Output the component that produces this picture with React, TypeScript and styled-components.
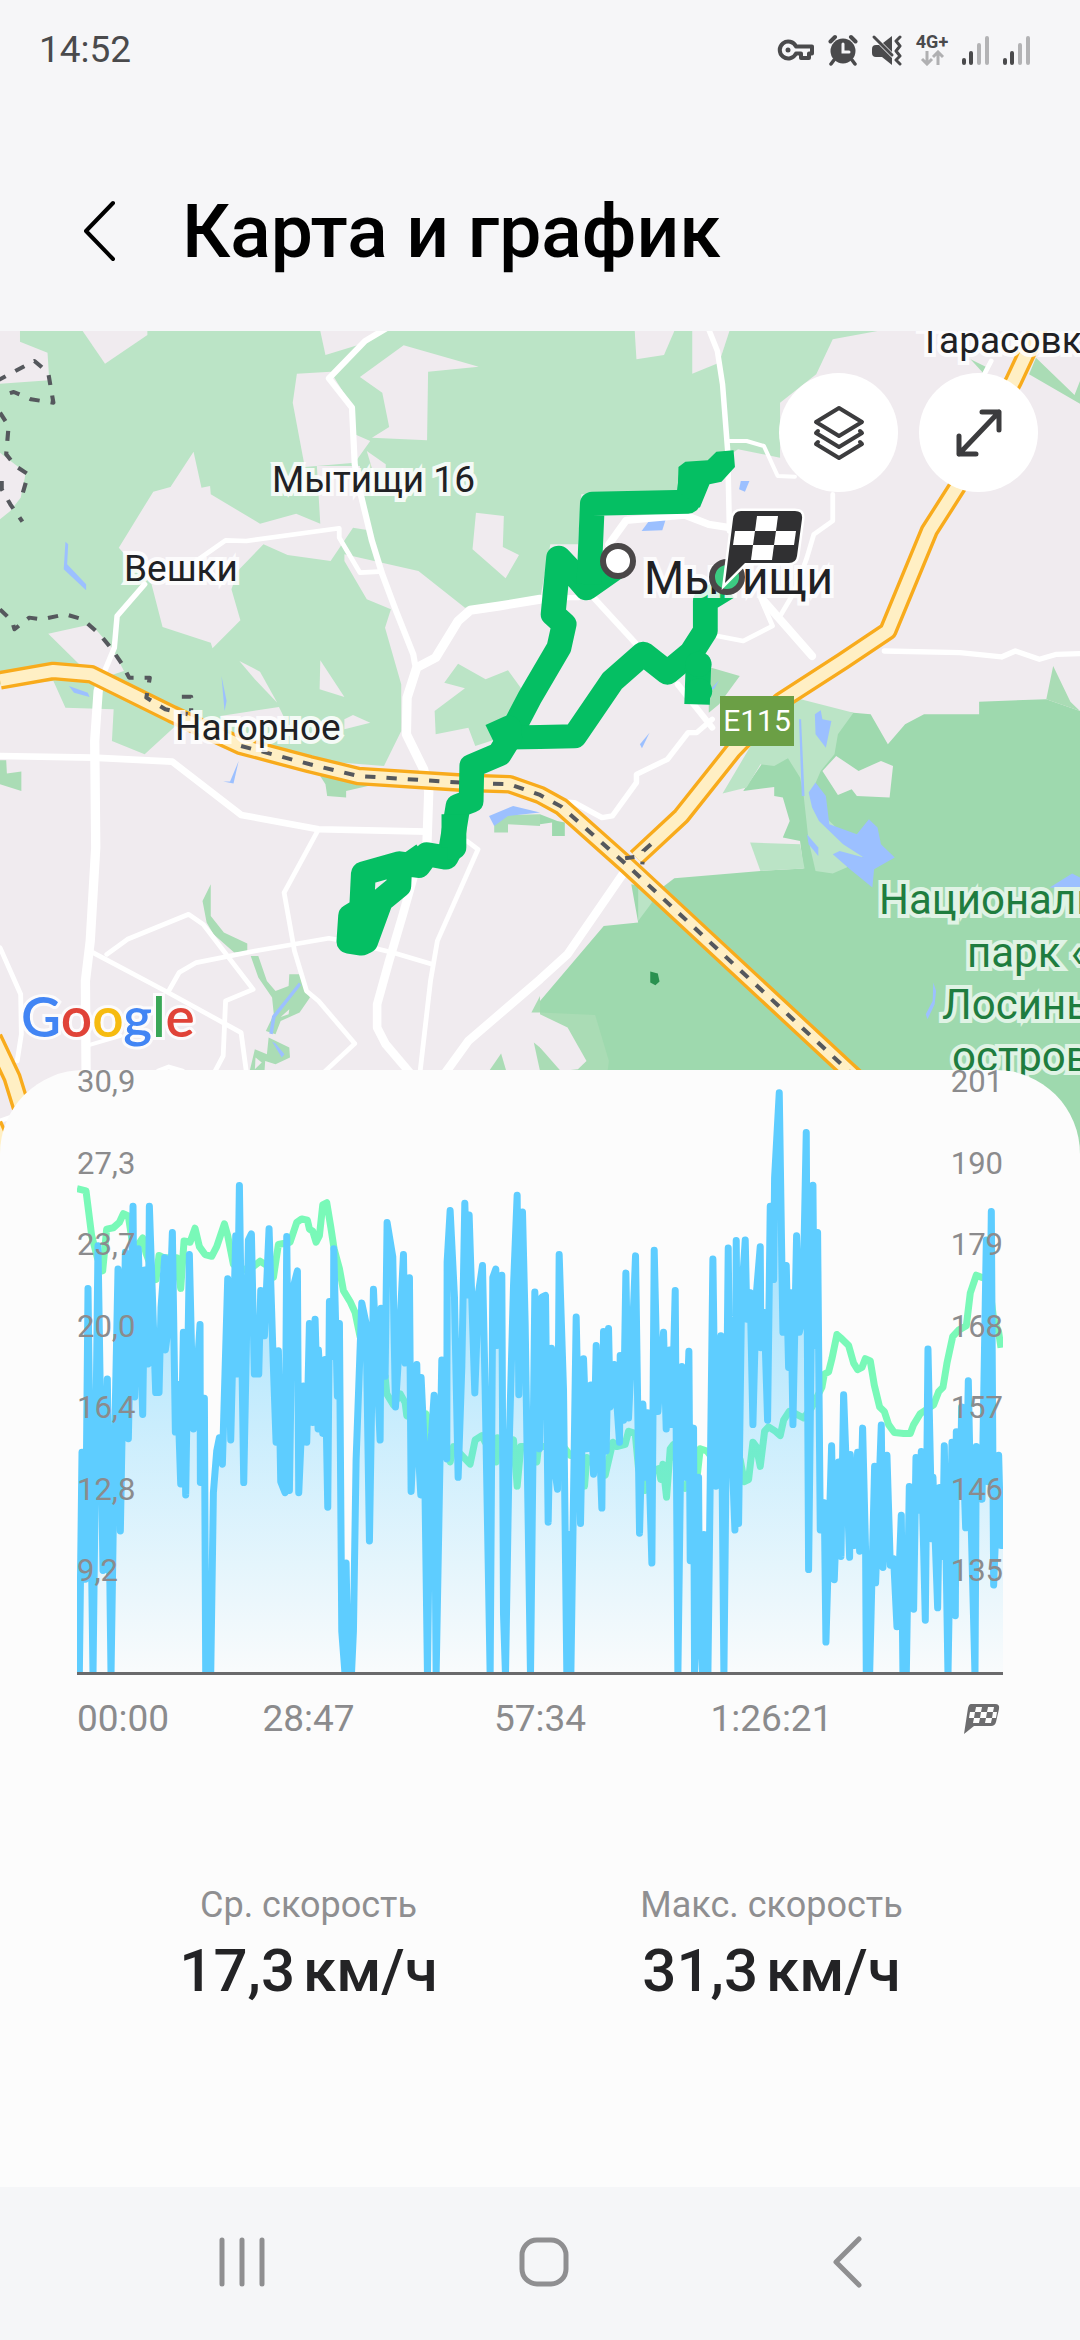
import React from "react";
import styled, { createGlobalStyle } from "styled-components";

const Global = createGlobalStyle`
  * { box-sizing: border-box; }
  body {
    margin: 0;
    background: #f6f6f8;
    font-family: Roboto, "Noto Sans", sans-serif;
  }
  button {
    border: 0;
    padding: 0;
    background: none;
    font: inherit;
    cursor: pointer;
  }
`;

const Screen = styled.div`
  display: flex;
  flex-direction: column;
  min-height: 100vh;
  overflow: hidden;
`;

const StatusBar = styled.header`
  display: flex;
  align-items: center;
  justify-content: space-between;
  height: 100px;
  padding: 0 50px 0 39px;
  color: #4a4a4c;
`;

const Clock = styled.time`
  font-size: 37px;
  line-height: 44px;
`;

const StatusIcons = styled.div`
  display: flex;
  align-items: center;
  gap: 13px;
`;

const Network = styled.div`
  display: flex;
  flex-direction: column;
  align-items: center;
  width: 32px;
  font-size: 18px;
  font-weight: 700;
  line-height: 16px;
`;

const TitleBar = styled.div`
  display: flex;
  align-items: center;
  gap: 58px;
  height: 231px;
  padding: 30px 74px 0;
`;

const BackButton = styled.button`
  display: flex;
  width: 50px;
  height: 80px;
  align-items: center;
  justify-content: center;
`;

const Title = styled.h1`
  margin: 0;
  font-size: 75px;
  font-weight: 500;
  line-height: 96px;
  color: #000;
`;

const MapArea = styled.section`
  position: relative;
  height: 824px;
  overflow: hidden;
  background: #f0ebef;
`;

const MapLayer = styled.svg`
  position: absolute;
  inset: 0;
  width: 100%;
  height: 100%;
`;

type LabelProps = { $x: number; $y: number; $size?: number; $park?: boolean };

const MapLabel = styled.span<LabelProps>`
  position: absolute;
  left: ${(p) => p.$x}px;
  top: ${(p) => p.$y}px;
  font-size: ${(p) => p.$size ?? 37}px;
  line-height: 52px;
  font-weight: 400;
  color: ${(p) => (p.$park ? "#1f7d3f" : "#202124")};
  white-space: nowrap;
  -webkit-text-stroke: 8px ${(p) => (p.$park ? "#e0f3e5" : "rgba(255, 255, 255, 0.85)")};
  paint-order: stroke fill;
  stroke-linejoin: round;
`;

const RoadShield = styled.span`
  position: absolute;
  left: 720px;
  top: 365px;
  width: 74px;
  height: 50px;
  background: #6b9f45;
  color: #fff;
  font-size: 30px;
  font-weight: 400;
  line-height: 50px;
  text-align: center;
`;

const GoogleMark = styled.span`
  position: absolute;
  left: 21px;
  top: 650px;
  font-family: Lato, sans-serif;
  font-size: 55px;
  font-weight: 600;
  line-height: 70px;
  -webkit-text-stroke: 6px rgba(255, 255, 255, 0.8);
  paint-order: stroke fill;
`;

const Letter = styled.span<{ $color: string }>`
  color: ${(p) => p.$color};
`;

const MapTools = styled.div`
  position: absolute;
  top: 42px;
  right: 42px;
  display: flex;
  gap: 21px;
`;

const RoundButton = styled.button`
  display: flex;
  width: 119px;
  height: 119px;
  align-items: center;
  justify-content: center;
  border-radius: 50%;
  background: #fff;
`;

const Panel = styled.main`
  position: relative;
  flex: 1;
  margin-top: -85px;
  padding: 0 77px;
  border-radius: 84px 84px 0 0;
  background: #fcfcfc;
`;

const Plot = styled.div`
  position: relative;
  height: 605px;
  border-bottom: 3px solid #6a6a6c;
`;

const PlotArt = styled.svg`
  display: block;
  width: 100%;
  height: 100%;
`;

const Scale = styled.div<{ $side: "left" | "right" }>`
  position: absolute;
  top: 0;
  ${(p) => p.$side}: 0;
  display: flex;
  flex-direction: column;
  justify-content: space-between;
  height: 513px;
  font-size: 31px;
  line-height: 24px;
  color: #8b8b8d;
`;

const TimeAxis = styled.div`
  display: grid;
  grid-template-columns: 1fr 2fr 2fr 2fr 1fr;
  align-items: center;
  justify-items: center;
  padding-top: 22px;
  font-size: 37px;
  line-height: 44px;
  color: #8b8b8d;
`;

const EdgeTick = styled.span<{ $end?: boolean }>`
  display: flex;
  justify-self: ${(p) => (p.$end ? "end" : "start")};
  padding-right: ${(p) => (p.$end ? 3 : 0)}px;
`;

const Stats = styled.dl`
  display: grid;
  grid-template-columns: 1fr 1fr;
  margin: 0;
  padding: 142px 0 100px;
  text-align: center;
`;

const StatName = styled.dt`
  font-size: 36px;
  line-height: 44px;
  color: #8f8f91;
`;

const StatValue = styled.dd`
  display: flex;
  justify-content: center;
  gap: 8px;
  margin: 6px 0 0;
  font-size: 60px;
  font-weight: 500;
  line-height: 76px;
  color: #232325;
`;

const NavBar = styled.nav`
  display: grid;
  grid-template-columns: repeat(3, 1fr);
  height: 153px;
  padding: 0 82px 4px 91px;
  background: #f5f6f8;
`;

const NavButton = styled.button`
  display: flex;
  align-items: center;
  justify-content: center;
`;

/* Speed, in three stretches; each x is counted from the stretch's start. */
const speed = [
  {
    start: 0,
    points:
      "58,1400 66,893 76,1182 84,520 99,1400 114,423 129,1162 142,726 153,1400 163,900 174,476 181,1072 196,438 205,862 219,333 224,767 235,430 248,807 254,478 264,692 268,333 287,757 297,757 303,563 314,450 316,660 328,590 337,393 346,847 352,738 362,965 370,620 377,990 388,443 400,840 420,602 421,962 433,770 437,1400 447,1200 452,1400 460,985 470,890 478,860 487,920 503,498 512,865 527,400 530,715 538,286 551,962 565,410 574,396 583,715 596,715 602,525 613,628 627,384 640,700 648,870 655,662 662,960 675,985 680,402 688,980 697,525 712,480 716,985 730,742 740,870 748,600 758,825 765,590 774,840 775,660 788,850 795,682 803,1018 808,550 820,675 821,430 832,765 838,600 845,1300 855,1400 858,1145 864,1400 874,1400 880,1300 888,910 905,553 918,600 928,1095 940,522 960,865 963,565 975,720 981,370",
  },
  {
    start: 990,
    points:
      "8,448 16,790 24,690 40,443 45,690 58,496 63,982 80,693 84,880 92,990 93,723 103,890 112,1400 120,900 132,763 138,1400 155,683 158,870 170,908 171,460 180,343 193,540 204,950 215,700 224,326 232,535 237,353 254,758 265,530 277,468 285,750 300,1400 308,495 317,476 321,650 335,490 340,1260 346,1400 358,850 370,515 381,308 386,762 397,346 405,600 421,1400 434,528 448,885 455,540 466,536 474,1052 484,656 488,900 502,977 507,443 520,750 530,1400 538,1080 542,1400 558,585 571,1055 580,680 590,885 602,740 610,943 618,650 635,1020 640,618 648,890 655,611 660,790 672,693 688,870 690,673 700,820 707,485 715,815 728,600 736,446 748,1077 758,783 768,950 772,803 785,1145 792,433 803,800 820,620 828,840 838,660 845,830 855,525 863,1400 875,698 883,950 896,663 900,1140 910,838 913,1400 925,950 927,1200 937,1400 941,1080 953,1400 968,453 977,970 992,628 1001,1400",
  },
  {
    start: 1980,
    points:
      "24,428 28,750 44,1070 48,411 55,1055 64,540 75,410 80,590 90,530 98,830 108,535 120,425 122,655 132,575 142,820 150,333 160,500 163,268 177,75 188,620 198,468 205,700 212,530 218,830 229,400 237,620 247,590 258,165 265,1160 278,285 282,650 292,393 300,1070 312,1008 317,1325 334,878 342,1183 355,915 362,1130 370,762 388,1132 390,898 403,1105 412,893 418,1118 427,838 436,1120 438,1400 447,1225 448,1400 463,925 466,1190 483,831 488,1155 500,900 510,1150 520,1135 530,1290 543,1036 548,1400 558,1400 567,971 580,1250 587,905 597,1025 603,891 615,1275 623,658 635,1090 638,950 652,1247 658,973 667,1130 672,878 683,1400 695,870 705,1265 708,846 720,990 724,790 736,1065 744,730 752,1040 764,1400 768,880 785,1000 798,410 803,960 813,345 820,1195 835,900 842,1105 848,1105",
  },
];

/* Heart rate, in the same units as the speed. */
const pulse = [
  {
    start: 0,
    points:
      "51,293 78,298 95,400 112,450 128,480 140,385 160,382 178,370 190,350 205,355 218,420 235,420 248,405 258,440 278,480 288,500 297,445 310,450 350,450 362,520 372,412 390,415 405,383 418,425 435,443 455,447 470,425 493,373 503,400 520,465 540,480 580,470 600,458 625,470 640,495 655,420 690,415 710,370 725,362 742,365 748,385 758,390 768,415 778,400 788,330 800,325 812,380 822,430 838,475 850,525 870,550 885,575 900,630 930,640 950,690 975,720 980,760 1000,785 1020,760 1035,780",
  },
  {
    start: 990,
    points:
      "50,810 90,820 103,880 107,805 130,850 150,850 180,915 190,880 215,900 240,920 255,865 275,855 285,870 300,880 318,915 322,860 345,880 370,865 378,940 381,970 392,880 420,880 440,915 445,880 520,880 540,900 570,905 583,970 590,905 610,920 645,945 668,870 680,880 705,875 715,845 735,850 745,930 765,980 780,940 805,930 812,955 818,920 829,995 840,885 850,875 870,960 885,975 900,950 922,940 930,885 950,890 980,920 1010,940",
  },
  {
    start: 1980,
    points:
      "28,938 60,910 72,960 85,955 98,870 108,880 120,925 133,845 145,835 165,845 180,855 190,820 207,800 225,805 250,815 275,790 305,745 312,715 325,710 335,680 350,625 365,635 385,650 400,690 412,705 425,700 435,680 450,685 462,740 478,790 492,800 505,830 522,848 550,850 570,850 580,830 600,805 640,785 655,755 668,745 680,690 697,630 715,615 738,605 750,530 768,490 785,495 805,500 820,590 835,620 842,655",
  },
];

const join = (parts: { start: number; points: string }[]) =>
  parts
    .flatMap(({ start, points }) =>
      points.split(" ").map((pair) => {
        const [x, y] = pair.split(",").map(Number);
        return `${x + start},${y}`;
      }),
    )
    .join(" ");

const speedLine = join(speed);
const pulseLine = join(pulse);

const speedTicks = ["30,9", "27,3", "23,7", "20,0", "16,4", "12,8", "9,2"];
const pulseTicks = ["201", "190", "179", "168", "157", "146", "135"];

const FOREST = "#bbe4c6";
const PARK = "#9ed9ae";
const GROVE = "#aadcb5";
const LAND = "#f0ebef";
const WATER = "#9cc0ff";

/* The map is drawn in four quarters, each with its own origin. */
const NW = "translate(0 0)";
const NE = "translate(1568 0)";
const SW = "translate(0 1230)";
const SE = "translate(1568 1230)";

function Areas({ at, fill, shapes }: { at: string; fill: string; shapes: string[] }) {
  return (
    <g transform={at} fill={fill}>
      {shapes.map((s) => (
        <polygon key={s} points={s} />
      ))}
    </g>
  );
}

function Roads({ at, roads }: { at: string; roads: [number, string][] }) {
  return (
    <g transform={at} fill="none" stroke="#fff" strokeLinecap="round" strokeLinejoin="round">
      {roads.map(([w, s]) => (
        <polyline key={s} points={s} strokeWidth={w} />
      ))}
    </g>
  );
}

const ring = "0,1048 155,1020 265,1030 500,1150 700,1245 900,1300 1040,1335 1340,1355 1480,1360 1568,1392 1630,1427 1818,1600 2490,2245";
const highway = "3020,-20 2943,150 2778,470 2698,600 2578,900 2448,990 2268,1110 2128,1260 1978,1455 1848,1580";
const bypass = "-20,2120 35,2240 62,2330";
const bypassEnd = "-20,2380 20,2475";

function Terrain() {
  return (
    <>
      <Areas
        at={NW}
        fill={FOREST}
        shapes={[
          "0,0 2548,0 2418,25 2370,130 2265,215 2265,380 2143,355 1968,480 1688,490 1678,640 1598,640 1568,805 1350,830 1215,720 1000,670 1000,690 1065,805 1135,835 1118,890 1165,1060 1165,1200 1115,1305 930,1290 780,1260 515,1180 420,1270 325,1230 330,1135 190,1130 155,1050 0,1060",
          "1330,998 1410,1045 1475,1018 1515,1075 1480,1140 1440,1225 1380,1245 1360,1190 1265,1210 1262,1140 1350,1072 1290,1055",
        ]}
      />
      <Areas
        at={NW}
        fill={LAND}
        shapes={[
          "0,0 58,0 58,32 138,65 143,148 0,158",
          "240,0 428,0 428,12 305,98",
          "930,0 1100,0 1040,42 945,72",
          "1172,43 1390,107 1243,122 1240,328 1080,320 1130,288 1110,185 1045,138",
          "862,128 960,122 1025,230 1030,310 1075,330 1030,395 885,408 850,215",
          "920,405 1045,405 1070,598 1025,590 960,690 835,672 765,640 690,720 672,775 698,868 617,952 612,935 472,888 440,760 345,650 445,482 495,468 562,362 585,470 610,465 612,490 755,578 860,548 930,578",
          "1065,360 1120,400 1120,412 1080,412",
          "1382,545 1463,555 1460,648 1507,672 1468,742 1372,655",
          "0,365 75,425 60,500 30,540 0,565",
          "140,908 265,880 325,950 360,1020 300,1040 230,1000",
          "695,990 755,1022 805,1115 740,1045",
          "930,988 1000,1098 928,1075",
          "640,1155 810,1128 830,1170 700,1190",
          "1000,1165 1025,1152 1075,1175 1000,1195",
        ]}
      />
      <Areas at={NW} fill={WATER} shapes={["190,632 198,640 195,700 250,760 250,778 185,715", "200,1065 255,1085 260,1098 215,1085", "643,1035 658,1110 652,1140"]} />
      <Areas at={NE} fill={LAND} shapes={["275,0 390,0 360,72 280,85", "442,0 550,0 520,95 442,128"]} />
      <Areas at={NE} fill={GROVE} shapes={["480,1005 580,1035 520,1120 490,1145 490,1080", "1250,85 1300,110 1290,130", "1440,80 1552,192 1568,150 1568,218 1420,130"]} />
      <Areas
        at={SE}
        fill={PARK}
        shapes={[
          "0,780 185,555 285,545 265,430 345,447 390,412 640,390 765,383 755,300 705,290 725,240 705,170 680,165 680,138 590,150 640,75 740,-100 910,-85 960,-80 1010,10 1060,-50 1115,-80 1275,-80 1275,-118 1470,-125 1568,-90 1568,1260 0,1260",
          "0,220 50,240 72,245 72,285 35,285 35,245 0,250",
        ]}
      />
      <Areas
        at={SE}
        fill={FOREST}
        shapes={[
          "740,-130 910,-85 865,-20 855,40 815,90 790,150 830,230 900,300 940,345 890,380 850,398 800,390 780,300 765,160 755,110 720,52 680,75 640,70 600,140 530,158 620,0",
          "610,305 755,310 768,383 640,390",
          "285,440 310,440 325,485 285,540",
        ]}
      />
      <Areas at={SE} fill={GROVE} shapes={["1470,-125 1490,-225 1540,-118 1568,-90", "0,815 160,822 200,960 195,1000 0,1000"]} />
      <Areas at={SE} fill={LAND} shapes={["820,90 860,45 925,90 990,60 1025,75 1015,170 920,165 905,145 865,162", "0,820 80,860 135,960 110,985 60,990 0,920"]} />
      <Areas at={SE} fill="#2a9150" shapes={["320,692 342,698 347,722 335,733 320,725"]} />
      <Areas
        at={SE}
        fill={WATER}
        shapes={[
          "800,125 830,165 840,250 920,280 955,235 980,260 990,310 1030,350 970,385 965,440 900,385 850,340 870,330 940,350 880,310 810,240 790,200 780,155",
          "775,280 808,320 808,345 780,310",
          "1480,440 1545,398 1568,410 1568,445",
          "1142,725 1150,750 1146,790 1125,835 1120,820 1140,780",
          "752,-65 758,-65 768,165 760,165",
        ]}
      />
      <Areas
        at={NE}
        fill={WATER}
        shapes={["583,450 608,450 595,482 578,475", "318,568 365,565 355,598 295,600", "375,560 410,555 380,567", "798,1150 815,1138 820,1165 846,1170 830,1250 800,1210", "290,1240 318,1205 296,1252", "495,1075 520,1048 505,1075"]}
      />
      <Areas
        at={SW}
        fill={GROVE}
        shapes={[
          "0,58 18,58 20,98 62,92 62,150 0,130",
          "612,430 612,525 650,575 718,608 718,632 680,635 620,580 600,545 588,480",
          "728,645 750,645 775,720 800,750 838,735 840,700 870,700 900,770 870,815 815,840 800,880 772,870 795,820 790,770 750,710",
          "780,890 840,920 842,950 800,970 770,960 768,990 725,990 740,925 775,940",
          "925,98 1090,130 1005,150 1005,170 950,165 945,130",
          "1435,240 1475,222 1568,220 1568,255 1475,250 1475,275 1435,275",
          "1543,815 1568,765 1568,815",
          "1455,938 1470,990 1420,990",
          "1550,905 1568,920 1568,990",
        ]}
      />
      <Areas at={SW} fill={WATER} shapes={["648,122 668,122 693,60 678,128", "1420,225 1490,195 1568,215 1475,225 1435,255", "868,725 874,732 800,830 792,880 782,878 790,825", "790,902 800,908 826,940 818,950"]} />
      <Areas at={SW} fill={LAND} shapes={["742,950 760,965 740,985", "815,828 840,805 838,820"]} />
    </>
  );
}

function Streets() {
  return (
    <>
      <Roads
        at={NW}
        roads={[
          [18, "1125,-10 1060,30 955,142 1022,230 1030,400 1045,480 1080,630 1110,730 1150,840 1200,970 1205,1000"],
          [14, "570,690 655,628 715,630 985,592 985,620 1045,725 1100,722"],
          [16, "420,760 340,855 332,950 300,1030"],
          [27, "300,1030 285,1080 275,1230 278,1550 262,1830 248,1950 250,2230"],
          [27, "1568,805 1450,825 1365,838 1330,870 1265,980 1210,1010 1182,1100 1180,1210 1230,1315 1245,1380 1240,1530"],
        ]}
      />
      <Roads
        at={NE}
        roads={[
          [16, "488,-10 515,60 530,160 545,360 550,600"],
          [12, "545,330 600,330 650,345 690,435 740,437"],
          [14, "850,490 850,570 795,610 775,680 740,780 700,850"],
          [22, "200,640 250,568 420,552 490,580 550,590"],
          [18, "160,805 280,940"],
          [18, "400,1060 500,1190"],
          [14, "515,915 590,930 675,885 640,800"],
          [24, "650,810 790,975"],
          [16, "1000,960 1220,965 1340,978 1380,960 1450,985 1500,970 1568,968"],
          [14, "1290,130 1310,90"],
          [16, "500,1165 455,1205 430,1205 370,1285 280,1330 280,1355 210,1455 180,1460 100,1415 60,1412"],
          [16, "70,800 110,800"],
        ]}
      />
      <Roads
        at={SW}
        roads={[
          [20, "0,45 270,50 500,62 700,222 925,265 1240,272"],
          [14, "925,265 825,455 855,630 890,750 925,780 1030,908 945,990"],
          [14, "310,640 370,595 548,520 590,550 735,745 655,780 648,945 625,990"],
          [14, "270,635 480,750 700,875 715,990"],
          [14, "490,750 520,695 570,665 740,630 955,592 1000,600 1140,635 1255,670"],
          [25, "1200,410 1170,520 1130,660 1095,790 1095,860 1120,910 1190,995"],
          [14, "1355,300 1388,325 1270,600 1250,720 1220,990"],
          [25, "1290,1000 1360,900 1568,715 1648,640 1808,400"],
          [14, "0,620 60,760 62,880 50,960"],
          [12, "250,915 350,885"],
          [14, "460,990 490,978 530,990"],
          [14, "0,1140 50,1122"],
        ]}
      />
    </>
  );
}

function Highways() {
  const lines = [highway, ring, bypass, bypassEnd];
  return (
    <g fill="none" strokeLinejoin="round">
      <g stroke="#f8ab1c" strokeWidth={56}>
        {lines.map((l) => (
          <polyline key={l} points={l} />
        ))}
      </g>
      <g stroke="#ffefc4" strokeWidth={36}>
        {lines.map((l) => (
          <polyline key={l} points={l} />
        ))}
      </g>
      <g stroke="#55585d" strokeWidth={12} strokeDasharray="30 32">
        <polyline points="700,1245 900,1300 1040,1335 1340,1355 1480,1360 1568,1392 1630,1427 1818,1600 2490,2245" />
        <polyline points="-10,150 100,90 140,125 155,215 90,205 40,183 0,195" />
        <polyline points="0,245 25,285 18,370 45,405 82,430 65,490 60,510" />
        <polyline points="5,450 5,475 30,520 65,572" />
        <polyline points="0,835 35,870 42,895 85,860 120,865 190,850 240,865 290,910 325,955 355,1000 375,1040 435,1040 425,1100 480,1135 545,1150" />
        <polyline points="1890,1540 1868,1560 1865,1600" />
        <polyline points="528,1097 555,1097 555,1140" />
        <polyline points="1815,1582 1842,1578" />
      </g>
    </g>
  );
}

function Route() {
  return (
    <g fill="none" stroke="#05bf63" strokeWidth={72} strokeLinejoin="round">
      <polyline points="1795,705 1703,772 1668,730 1622,680 1606,850 1638,880 1623,950 1538,1100 1480,1215" />
      <polyline points="1710,760 1720,518 1998,512 2008,430" />
      <polygon stroke="none" fill="#05bf63" points="1968,480 1970,408 1990,392 2055,388 2080,362 2130,358 2134,408 2095,452 2060,460 2032,530" />
      <polyline points="1455,1220 1568,1218 1668,1216 1778,1050 1868,968 1938,1025 2008,965 2048,900 2048,810 2112,770" />
      <polyline strokeWidth={74} points="2008,985 2028,1000 2024,1120" />
      <circle cx="2028" cy="1000" r="38" fill="#05bf63" stroke="none" />
      <circle cx="2030" cy="1080" r="38" fill="#05bf63" stroke="none" />
      <polyline points="1425,1215 1478,1190 1480,1220 1450,1270 1370,1305 1368,1410 1330,1425 1310,1550 1295,1580 1240,1570 1215,1605 1160,1597 1055,1628 1050,1735 1018,1755 1013,1832 1050,1838 1062,1832 1105,1710 1158,1665 1160,1620 1230,1570" />
      <polyline points="1300,1550 1318,1550 1318,1450" />
    </g>
  );
}

function Checkers({ body, light }: { body: string; light: string }) {
  return (
    <>
      <path d="M18 2h54q8 0 7 8l-5 37q-1 7-8 7H22L2 74l8-64q1-8 8-8z" fill={body} />
      <g fill={light}>
        <path d="M34 7h21l-2 15H32z" />
        <path d="M12 22h20l-2 14H10z" />
        <path d="M53 22h20l-2 14H51z" />
        <path d="M30 36h21l-2 15H28z" />
      </g>
    </>
  );
}

function SmallFlag() {
  return (
    <svg width="37" height="32" viewBox="0 0 37 32" role="img" aria-label="Финиш">
      <path d="M8 1h24q5 0 4 5l-3 13q-1 4-5 4H11L1 31 5 5q1-4 3-4z" fill="#6c6c6e" />
      <g fill="#fcfcfc">
        <path d="M13 4h6l-1 5h-6z" />
        <path d="M25 4h6l-1 5h-6z" />
        <path d="M7 9h5l-1 6H6z" />
        <path d="M18 9h6l-1 6h-6z" />
        <path d="M30 9h4l-1 6h-4z" />
        <path d="M11 15h6l-1 5h-6z" />
        <path d="M23 15h6l-1 5h-6z" />
      </g>
    </svg>
  );
}

function Signal() {
  return (
    <svg width="28" height="32" viewBox="0 0 28 32" strokeWidth="4" strokeLinecap="round">
      <path d="M3 26v3M10 19v10" stroke="#4a4a4c" />
      <path d="M18 11v18M26 4v25" stroke="#b3b3b5" />
    </svg>
  );
}

export default function App() {
  return (
    <Screen>
      <Global />
      <StatusBar>
        <Clock>14:52</Clock>
        <StatusIcons>
          <svg width="38" height="24" viewBox="0 0 38 24" fill="none" stroke="#4a4a4c" strokeWidth="4">
            <path d="M19 8.500H35V15.500H32V20H24V15.500H19A8.500 8.500 0 1 1 19 8.500Z" strokeLinejoin="round" />
            <circle cx="11" cy="12" r="2.500" fill="#4a4a4c" stroke="none" />
          </svg>
          <svg width="30" height="32" viewBox="0 0 30 32" fill="none" strokeLinecap="round">
            <circle cx="15" cy="17" r="12.500" fill="#4a4a4c" />
            <path d="M2.500 7.500L7 3M27.500 7.500L23 3" stroke="#4a4a4c" strokeWidth="4" />
            <path d="M6 26l-3 4M24 26l3 4" stroke="#4a4a4c" strokeWidth="3.500" />
            <path d="M15 10v8h6" stroke="#f6f6f8" strokeWidth="3" />
          </svg>
          <svg width="32" height="32" viewBox="0 0 32 32" fill="none">
            <path d="M12 9L21 2v16z" fill="#4a4a4c" />
            <path d="M8 11L21 24v7L11 23H5q-4 0-4-4v-4q0-4 4-4z" fill="#4a4a4c" />
            <path d="M3 3l18 18" stroke="#4a4a4c" strokeWidth="3" strokeLinecap="round" />
            <path d="M29 3l-4 4 4 5-4 5 4 5-4 4 4 4" stroke="#4a4a4c" strokeWidth="3" strokeLinejoin="round" strokeLinecap="round" />
          </svg>
          <Network>
            4G+
            <svg width="26" height="16" viewBox="0 0 26 16" fill="none" stroke="#b0b0b2" strokeWidth="3">
              <path d="M8 1v13M3 9l5 5 5-5M19 15V2M14 7l5-5 5 5" />
            </svg>
          </Network>
          <Signal />
          <Signal />
        </StatusIcons>
      </StatusBar>

      <TitleBar>
        <BackButton aria-label="Назад">
          <svg width="34" height="62" viewBox="0 0 34 62" fill="none" stroke="#000" strokeWidth="4" strokeLinecap="round" strokeLinejoin="round">
            <path d="M31 3L4 31l27 28" />
          </svg>
        </BackButton>
        <Title>Карта и график</Title>
      </TitleBar>

      <MapArea aria-label="Карта">
        <MapLayer viewBox="0 0 1080 824" preserveAspectRatio="xMinYMin slice">
          <g transform="scale(0.3444 0.3333)">
            <Terrain />
            <Streets />
            <Highways />
            <Route />
          </g>
        </MapLayer>

        <MapLabel $x={272} $y={123}>Мытищи 16</MapLabel>
        <MapLabel $x={124} $y={212}>Вешки</MapLabel>
        <MapLabel $x={175} $y={371}>Нагорное</MapLabel>
        <MapLabel $x={919} $y={-16}>Тарасовка</MapLabel>
        <MapLabel $x={644} $y={221} $size={46}>Мытищи</MapLabel>
        <MapLabel $x={879} $y={543} $size={42} $park>Национальный</MapLabel>
        <MapLabel $x={967} $y={596} $size={42} $park>парк «</MapLabel>
        <MapLabel $x={942} $y={648} $size={42} $park>Лосиный</MapLabel>
        <MapLabel $x={952} $y={700} $size={42} $park>остров»</MapLabel>
        <RoadShield>E115</RoadShield>
        <GoogleMark>
          <Letter $color="#4285f4">G</Letter>
          <Letter $color="#e04338">o</Letter>
          <Letter $color="#f6bb10">o</Letter>
          <Letter $color="#4285f4">g</Letter>
          <Letter $color="#3aa757">l</Letter>
          <Letter $color="#e04338">e</Letter>
        </GoogleMark>

        <MapLayer viewBox="0 0 1080 824" preserveAspectRatio="xMinYMin slice">
          <circle cx="618" cy="230" r="15" fill="#fff" stroke="#4a4748" strokeWidth="6" />
          <circle cx="727" cy="246" r="15" fill="#3ccb82" stroke="#4a4748" strokeWidth="6" />
          <g transform="translate(723 178)">
            <path d="M18 2h54q8 0 7 8l-5 37q-1 7-8 7H22L2 74l8-64q1-8 8-8z" fill="#fff" stroke="#fff" strokeWidth="5" />
            <Checkers body="#303032" light="#fff" />
          </g>
        </MapLayer>

        <MapTools>
          <RoundButton aria-label="Слои">
            <svg width="52" height="56" viewBox="0 0 52 56" fill="none" stroke="#3c3c3e" strokeWidth="4" strokeLinejoin="round" strokeLinecap="round">
              <path d="M26 3l23 14-23 14L3 17z" />
              <path d="M5 26l-2 2 23 14 23-14-2-2" />
              <path d="M5 37l-2 2 23 14 23-14-2-2" />
            </svg>
          </RoundButton>
          <RoundButton aria-label="Развернуть">
            <svg width="48" height="50" viewBox="0 0 48 50" fill="none" stroke="#3c3c3e" strokeWidth="5" strokeLinecap="round" strokeLinejoin="round">
              <path d="M27 4h17v18M4 28v18h17M44 4L4 46" />
            </svg>
          </RoundButton>
        </MapTools>
      </MapArea>

      <Panel>
        <Plot>
          <PlotArt viewBox="51 23 2777 1370" preserveAspectRatio="none" role="img" aria-label="График скорости и пульса">
            <defs>
              <linearGradient id="speedFill" gradientUnits="userSpaceOnUse" x1="0" y1="300" x2="0" y2="1393">
                <stop offset="0" stopColor="#5ecdff" stopOpacity="0.6" />
                <stop offset="1" stopColor="#5ecdff" stopOpacity="0.02" />
              </linearGradient>
            </defs>
            <polyline points={pulseLine} fill="none" stroke="#79f9b8" strokeWidth="7" strokeLinejoin="round" vectorEffect="non-scaling-stroke" />
            <polygon points={`58,1393 ${speedLine} 2828,1393`} fill="url(#speedFill)" />
            <polyline points={speedLine} fill="none" stroke="#5ecdff" strokeWidth="7" strokeLinejoin="round" vectorEffect="non-scaling-stroke" />
          </PlotArt>
          <Scale $side="left">
            {speedTicks.map((t) => (
              <span key={t}>{t}</span>
            ))}
          </Scale>
          <Scale $side="right">
            {pulseTicks.map((t) => (
              <span key={t}>{t}</span>
            ))}
          </Scale>
        </Plot>
        <TimeAxis>
          <EdgeTick>00:00</EdgeTick>
          <span>28:47</span>
          <span>57:34</span>
          <span>1:26:21</span>
          <EdgeTick $end>
            <SmallFlag />
          </EdgeTick>
        </TimeAxis>

        <Stats>
          <div>
            <StatName>Ср. скорость</StatName>
            <StatValue>
              <span>17,3</span>
              <span>км/ч</span>
            </StatValue>
          </div>
          <div>
            <StatName>Макс. скорость</StatName>
            <StatValue>
              <span>31,3</span>
              <span>км/ч</span>
            </StatValue>
          </div>
        </Stats>
      </Panel>

      <NavBar>
        <NavButton aria-label="Недавние">
          <svg width="48" height="52" viewBox="0 0 48 52" stroke="#8f8f91" strokeWidth="5" strokeLinecap="round">
            <path d="M4 4v44M24 4v44M44 4v44" />
          </svg>
        </NavButton>
        <NavButton aria-label="Домой">
          <svg width="52" height="52" viewBox="0 0 52 52" fill="none" stroke="#8f8f91" strokeWidth="5">
            <rect x="4" y="4" width="44" height="44" rx="15" />
          </svg>
        </NavButton>
        <NavButton aria-label="Назад">
          <svg width="32" height="54" viewBox="0 0 32 54" fill="none" stroke="#8f8f91" strokeWidth="5" strokeLinecap="round" strokeLinejoin="round">
            <path d="M28 4L5 27l23 23" />
          </svg>
        </NavButton>
      </NavBar>
    </Screen>
  );
}
